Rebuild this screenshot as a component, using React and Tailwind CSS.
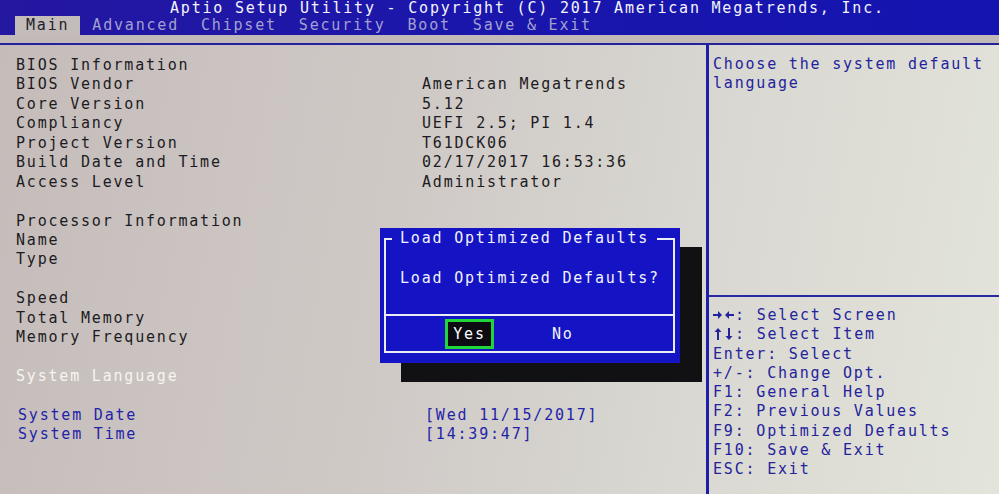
import React from 'react'

const mono = { fontFamily: '"DejaVu Sans Mono", "Liberation Mono", monospace' }

const tabs = ['Main', 'Advanced', 'Chipset', 'Security', 'Boot', 'Save & Exit']

// label, value, color of label
const rows = [
  ['BIOS Information', ''],
  ['BIOS Vendor', 'American Megatrends'],
  ['Core Version', '5.12'],
  ['Compliancy', 'UEFI 2.5; PI 1.4'],
  ['Project Version', 'T61DCK06'],
  ['Build Date and Time', '02/17/2017 16:53:36'],
  ['Access Level', 'Administrator'],
  ['', ''],
  ['Processor Information', ''],
  ['Name', ''],
  ['Type', ''],
  ['', ''],
  ['Speed', ''],
  ['Total Memory', ''],
  ['Memory Frequency', ''],
  ['', ''],
  ['System Language', '', 'white'],
  ['', ''],
  ['System Date', '[Wed 11/15/2017]', 'blue'],
  ['System Time', '[14:39:47]', 'blue'],
]

function LeftRight() {
  return (
    <svg width="22" height="12" viewBox="0 0 22 12" className="inline-block align-[-1px]" fill="currentColor">
      <polygon points="0,5 5,5 5,2 9,6 5,10 5,7 0,7" />
      <polygon points="21,5 16,5 16,2 12,6 16,10 16,7 21,7" />
    </svg>
  )
}

function UpDown() {
  return (
    <svg width="22" height="12" viewBox="0 0 22 12" className="inline-block align-[-1px]" fill="currentColor">
      <polygon points="4,12 4,4 1.5,4 5,0 8.5,4 6,4 6,12" />
      <polygon points="15,0 15,8 12.5,8 16,12 19.5,8 17,8 17,0" />
    </svg>
  )
}

const help = [
  [LeftRight, ': Select Screen'],
  [UpDown, ': Select Item'],
  [null, 'Enter: Select'],
  [null, '+/-: Change Opt.'],
  [null, 'F1: General Help'],
  [null, 'F2: Previous Values'],
  [null, 'F9: Optimized Defaults'],
  [null, 'F10: Save & Exit'],
  [null, 'ESC: Exit'],
]

function Row({ label, value, tone }) {
  const color =
    tone === 'white' ? 'text-[#f6f5ee]' : tone === 'blue' ? 'text-[#2323a8]' : 'text-[#1c1b22]'
  return (
    <div className={`grid grid-cols-[406px_1fr] h-[19.45px] leading-[19.45px] ${color}`}>
      <span className={tone === 'blue' ? 'pl-[2px]' : ''}>{label}</span>
      <span className={tone === 'blue' ? 'pl-[3px]' : ''}>{value}</span>
    </div>
  )
}

export default function App() {
  return (
    <div
      style={mono}
      className="relative w-[999px] h-[494px] overflow-hidden text-[15px] tracking-[1.8px] bg-[linear-gradient(100deg,#c5bcba_0%,#cfc9c6_40%,#d9d8d2_70%,#e3e4db_100%)]"
    >
      {/* header */}
      <div className="h-[35px] bg-[linear-gradient(90deg,#2417a0_0%,#1a16ac_50%,#1414b0_100%)]">
        <div className="h-[16px] leading-[17px] pl-[170px] text-[#f4f4fb] whitespace-pre">
          Aptio Setup Utility - Copyright (C) 2017 American Megatrends, Inc.
        </div>
        <div className="flex h-[19px] leading-[19px] pl-[15px]">
          {tabs.map((t, i) =>
            i === 0 ? (
              <span key={t} className="bg-[#c4bcba] text-[#23212a] px-[11px] mr-[12px]">
                {t}
              </span>
            ) : (
              <span key={t} className="text-[#a3a1cf] mr-[22px] whitespace-pre">
                {t}
              </span>
            )
          )}
        </div>
      </div>
      <div className="h-[8px] bg-[#c2bab9]" />
      <div className="h-[2px] bg-[#24229a]" />

      {/* body */}
      <div className="flex h-[449px]">
        <div className="w-[706px] pt-[11px] pl-[16px]">
          {rows.map(([l, v, tone], i) => (
            <Row key={i} label={l} value={v} tone={tone} />
          ))}
        </div>
        <div className="w-[3px] bg-[#1e1ea6]" />
        <div className="flex-1 flex flex-col text-[#24239c]">
          <div className="h-[250px] pt-[10px] pl-[4px] leading-[19.45px]">
            <div>Choose the system default</div>
            <div>language</div>
          </div>
          <div className="h-[2px] bg-[#2a2aa0]" />
          <div className="pt-[9px] pl-[4px]">
            {help.map(([Icon, h]) => (
              <div key={h} className="h-[19.3px] leading-[19.3px] whitespace-pre">
                {Icon && <Icon />}
                {h}
              </div>
            ))}
          </div>
        </div>
      </div>

      {/* dialog */}
      <div className="absolute left-[401px] top-[247px] w-[301px] h-[135px] bg-[#111114]" />
      <div className="absolute left-[380px] top-[228px] w-[300px] h-[135px] bg-[#1414c4]">
        <div className="absolute left-[4px] top-[10px] w-[291px] h-[115px] border-2 border-[#ececf6]">
          <span className="absolute left-[6px] -top-[11px] leading-[19px] bg-[#1414c4] px-[8px] text-[#f2f2fa] whitespace-pre">
            Load Optimized Defaults
          </span>
          <div className="h-[74px] pt-[28px] pl-[14px] leading-[20px] text-[#f2f2fa]">
            Load Optimized Defaults?
          </div>
          <div className="h-[2px] bg-[#ececf6]" />
          <div className="flex items-center pt-[3px] pl-[59px]">
            <div className="w-[49px] h-[30px] border-[3px] border-[#22d63a] bg-[#0c0c12] flex items-center justify-center text-white">
              Yes
            </div>
            <span className="ml-[58px] text-[#f2f2fa]">No</span>
          </div>
        </div>
      </div>
    </div>
  )
}
